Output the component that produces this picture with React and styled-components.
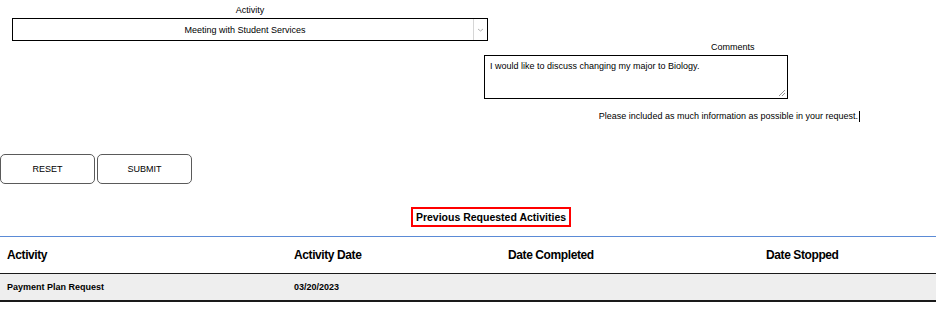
import React from 'react'
import styled, { createGlobalStyle } from 'styled-components'

const GlobalStyle = createGlobalStyle`
  body {
    margin: 0;
    background: #ffffff;
    font-family: "Liberation Sans", Arial, sans-serif;
    color: #000000;
  }
`

const Page = styled.div`
  width: 936px;
  display: flex;
  flex-direction: column;
`

const Form = styled.div`
  display: flex;
  flex-direction: column;
  padding-top: 5px;
`

const ActivityField = styled.div`
  margin-left: 12px;
  width: 476px;
  display: flex;
  flex-direction: column;
  align-items: center;
`

const Label = styled.div`
  font-size: 9px;
  line-height: 11px;
  margin-bottom: 2px;
`

const Select = styled.div`
  width: 100%;
  height: 23px;
  box-sizing: border-box;
  border: 1px solid #000000;
  display: flex;
  align-items: center;
`

const SelectValue = styled.div`
  flex: 1;
  text-align: center;
  font-size: 9px;
  padding-left: 4px;
`

const SelectArrow = styled.div`
  width: 13px;
  height: 100%;
  border-left: 1px solid #d6d6d6;
  display: flex;
  align-items: center;
  justify-content: center;
`

const CommentsBlock = styled.div`
  margin-left: 484px;
  width: 376px;
  display: flex;
  flex-direction: column;
  margin-top: 1px;
`

const CommentsLabel = styled(Label)`
  padding-left: 227px;
  margin-bottom: 2px;
`

const TextArea = styled.div`
  width: 304px;
  height: 44px;
  box-sizing: border-box;
  border: 1px solid #000000;
  position: relative;
  font-size: 9px;
  padding: 5px 5px;
`

const Grip = styled.svg`
  position: absolute;
  right: 1px;
  bottom: 1px;
`

const Hint = styled.div`
  margin-top: 12px;
  font-size: 9px;
  line-height: 11px;
  display: flex;
  justify-content: flex-end;
  align-items: center;
`

const Caret = styled.span`
  display: inline-block;
  width: 1px;
  height: 11px;
  background: #000000;
  margin-left: 1px;
`

const Buttons = styled.div`
  display: flex;
  gap: 2px;
  margin-top: 32px;
`

const Button = styled.button`
  width: 95px;
  height: 30px;
  box-sizing: border-box;
  border: 1px solid #5a5a5a;
  border-radius: 5px;
  background: #ffffff;
  font-family: "Liberation Sans", Arial, sans-serif;
  font-size: 9px;
  color: #000000;
  padding: 0;
`

const SectionTitle = styled.div`
  align-self: center;
  margin-top: 23px;
  margin-left: 46px;
  border: 2px solid #ff0000;
  padding: 2px 3px;
  font-size: 10.5px;
  font-weight: bold;
  line-height: 12px;
`

const Table = styled.div`
  margin-top: 9px;
  border-top: 1px solid #5b8bd6;
`

const Row = styled.div`
  display: grid;
  grid-template-columns: 287px 214px 258px 177px;
  align-items: center;
  height: ${p => p.$head ? 36 : 26}px;
  background: ${p => p.$head ? '#ffffff' : '#eeeeee'};
  border-bottom: ${p => p.$head ? 1 : 2}px solid #1a1a1a;
`

const Cell = styled.div`
  padding-left: 7px;
  font-weight: bold;
  font-size: ${p => p.$head ? 12 : 9}px;
  letter-spacing: ${p => p.$head ? -0.4 : 0}px;
`

export default function App() {
  return (
    <Page>
      <GlobalStyle />
      <Form>
        <ActivityField>
          <Label>Activity</Label>
          <Select>
            <SelectValue>Meeting with Student Services</SelectValue>
            <SelectArrow>
              <svg width="7" height="4" viewBox="0 0 7 4">
                <path d="M1 1 L3.5 3 L6 1" fill="none" stroke="#a0a0a0" strokeWidth="0.8" />
              </svg>
            </SelectArrow>
          </Select>
        </ActivityField>
        <CommentsBlock>
          <CommentsLabel>Comments</CommentsLabel>
          <TextArea>
            I would like to discuss changing my major to Biology.
            <Grip width="9" height="9" viewBox="0 0 9 9">
              <path d="M8 2 L2 8 M8 5 L5 8" stroke="#777" strokeWidth="0.8" />
            </Grip>
          </TextArea>
          <Hint>
            Please included as much information as possible in your request.
            <Caret />
          </Hint>
        </CommentsBlock>
        <Buttons>
          <Button>RESET</Button>
          <Button>SUBMIT</Button>
        </Buttons>
      </Form>
      <SectionTitle>Previous Requested Activities</SectionTitle>
      <Table>
        <Row $head>
          <Cell $head>Activity</Cell>
          <Cell $head>Activity Date</Cell>
          <Cell $head>Date Completed</Cell>
          <Cell $head>Date Stopped</Cell>
        </Row>
        <Row>
          <Cell>Payment Plan Request</Cell>
          <Cell>03/20/2023</Cell>
          <Cell></Cell>
          <Cell></Cell>
        </Row>
      </Table>
    </Page>
  )
}
